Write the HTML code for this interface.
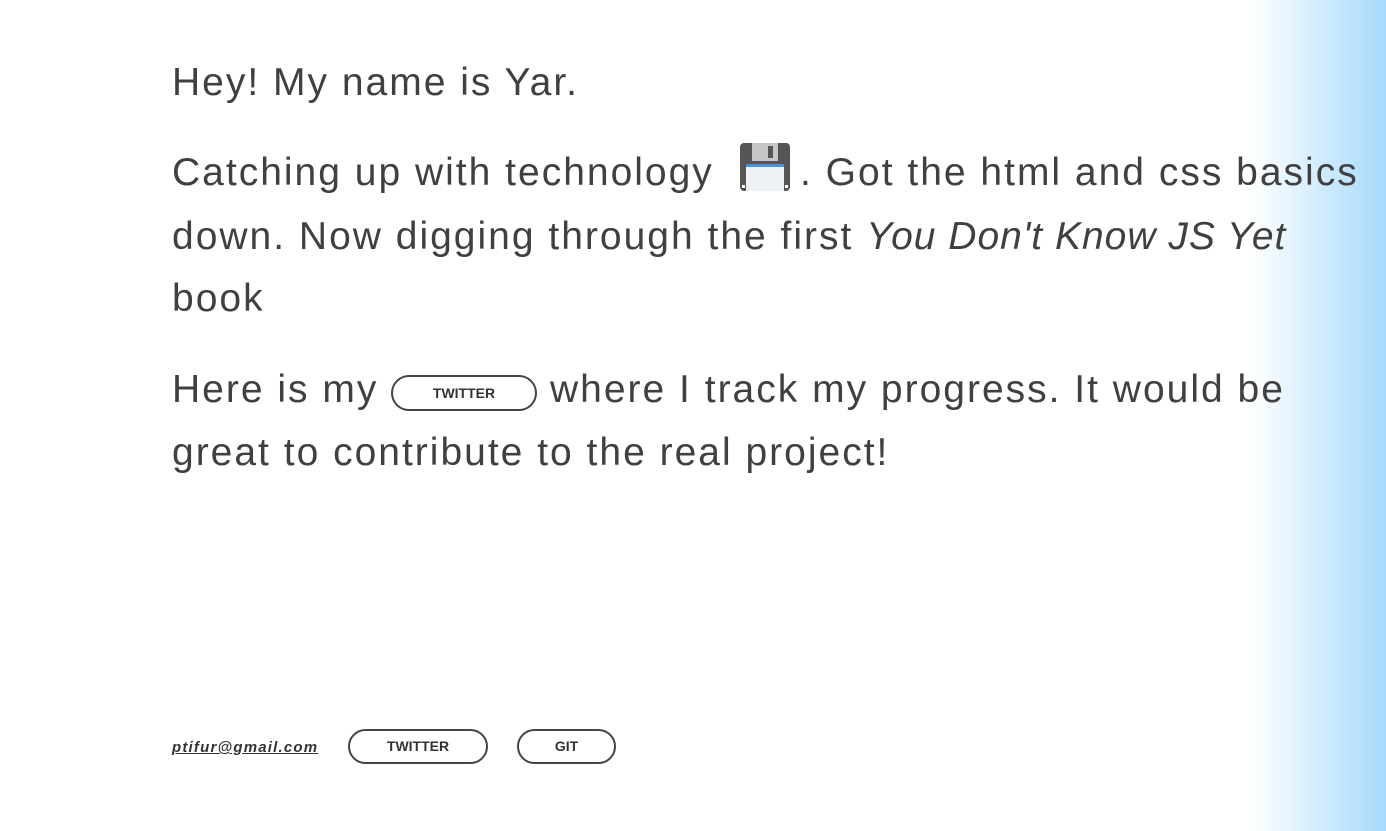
<!DOCTYPE html>
<html><head><meta charset="utf-8"><style>
html,body{margin:0;padding:0}
body{width:1386px;height:831px;overflow:hidden;position:relative;font-family:"Liberation Sans",sans-serif;color:#3a3a3a;
background:linear-gradient(to right,#fff 0,#fff 1250px,#e6f4fe 1290px,#a6dafc 1386px);}
.l{position:absolute;left:172px;font-size:39px;line-height:64px;white-space:nowrap;letter-spacing:2px;color:#404040}
.btn{position:absolute;border:2px solid #444;border-radius:18px;box-sizing:border-box;font-size:14px;font-weight:bold;text-align:center;color:#333;background:#fff}
</style></head><body>
<div class="l" style="top:51px">Hey! My name is Yar.</div>
<div class="l" style="top:141px">Catching up with technology</div>
<svg style="position:absolute;left:740px;top:143px" width="50" height="48" viewBox="0 0 50 48">
<rect x="0" y="0" width="50" height="48" rx="4" fill="#555"/>
<rect x="12" y="0" width="26" height="18" fill="#c6c6c6"/>
<rect x="28" y="3" width="5" height="12" fill="#555"/>
<rect x="6" y="21" width="38" height="27" fill="#eef2f6"/>
<rect x="6" y="21" width="38" height="3" fill="#4b8fd6"/>
<rect x="2" y="42" width="3" height="3" fill="#fff"/><rect x="45" y="42" width="3" height="3" fill="#fff"/>
</svg>
<div class="l" style="top:141px;left:800px">. Got the html and css basics</div>
<div class="l" style="top:205px">down. Now digging through the first <i style="letter-spacing:1px">You Don't Know JS Yet</i></div>
<div class="l" style="top:267px">book</div>
<div class="l" style="top:358px">Here is my</div>
<div class="btn" style="left:391px;top:375px;width:146px;height:36px;line-height:32px">TWITTER</div>
<div class="l" style="top:358px;left:550px">where I track my progress. It would be</div>
<div class="l" style="top:421px">great to contribute to the real project!</div>
<div style="position:absolute;left:172px;top:739px;font-size:15px;font-weight:bold;font-style:italic;text-decoration:underline;color:#333;letter-spacing:1.2px">ptifur@gmail.com</div>
<div class="btn" style="left:348px;top:729px;width:140px;height:35px;line-height:31px">TWITTER</div>
<div class="btn" style="left:517px;top:729px;width:99px;height:35px;line-height:31px">GIT</div>
</body></html>
